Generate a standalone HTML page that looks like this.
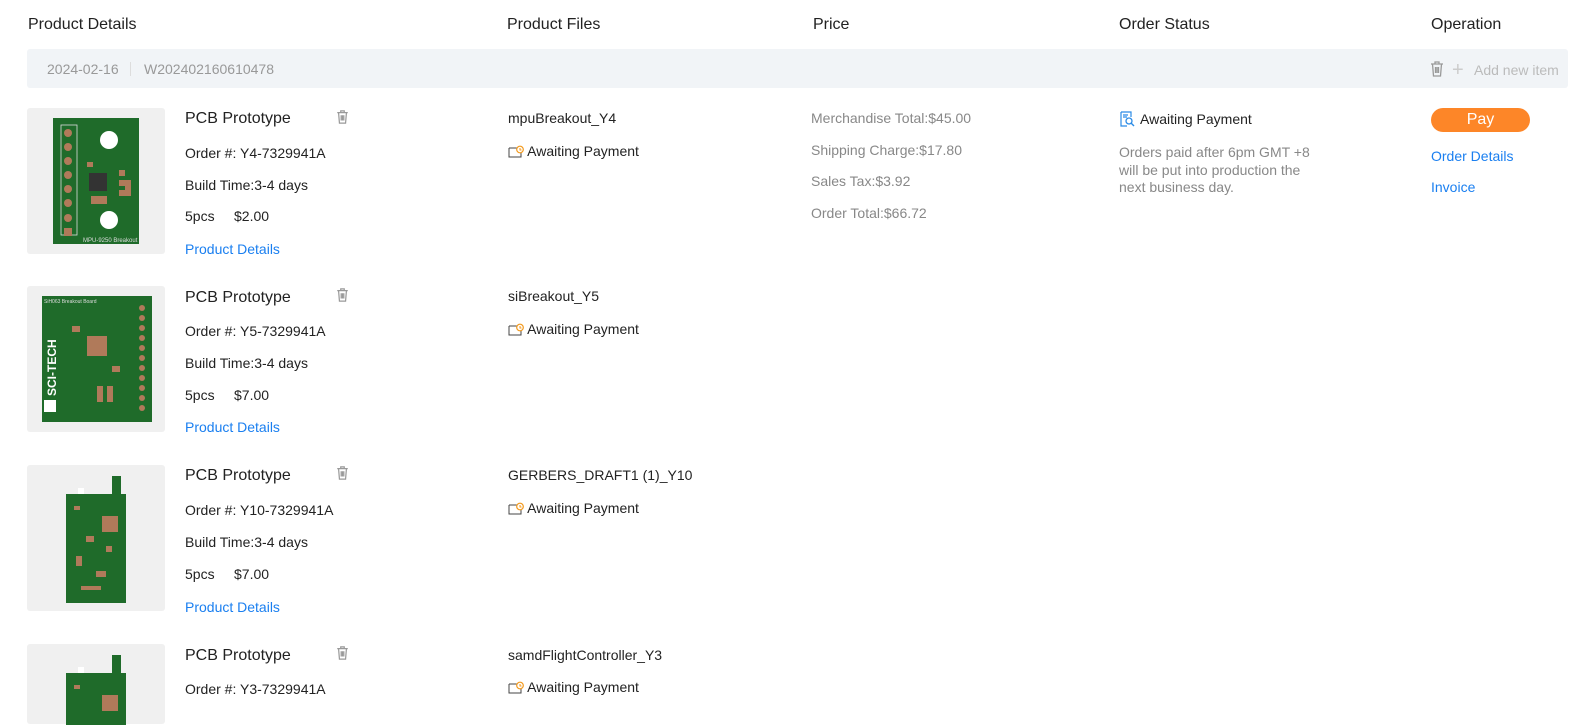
<!DOCTYPE html>
<html><head><meta charset="utf-8"><style>
*{margin:0;padding:0;box-sizing:border-box}
body{width:1591px;height:712px;overflow:hidden;background:#fff;font-family:"Liberation Sans",Arial,sans-serif;color:#222;position:relative}
.a{position:absolute;white-space:nowrap}
.h{font-size:16px;top:16px;color:#222}
.bar{position:absolute;left:27px;top:49px;width:1541px;height:39px;background:#f1f4f7;border-radius:3px}
.g{color:#999;font-size:14px}
.img{position:absolute;left:27px;width:138px;height:146px;background:#f0f0f0;border-radius:3px}
.pcb{position:absolute;background:#1f6b2a;border:1px solid #164f1e}
.t{font-size:14px;color:#222}
.lk{font-size:14px;color:#1a7ff0}
.p{font-size:14px;color:#888}
</style></head><body>
<div class="a h" style="left:28px">Product Details</div>
<div class="a h" style="left:507px">Product Files</div>
<div class="a h" style="left:813px">Price</div>
<div class="a h" style="left:1119px">Order Status</div>
<div class="a h" style="left:1431px">Operation</div>
<div class="bar"></div>
<div class="a g" style="left:47px;top:61px">2024-02-16</div>
<div class="a" style="left:130px;top:62px;width:1px;height:14px;background:#ddd"></div>
<div class="a g" style="left:144px;top:61px">W202402160610478</div>
<svg class="a" style="left:1430px;top:61px" width="14" height="16" viewBox="0 0 14 16"><path d="M1 3h12M5 3V1h4v2M2.5 3l1 12h7l1-12M5.5 6v6M7 6v6M8.5 6v6" fill="none" stroke="#999" stroke-width="1.3"/></svg>
<div class="a g" style="left:1452px;top:59px;font-size:20px;color:#ccc">+</div>
<div class="a g" style="left:1474px;top:62px;color:#bbb">Add new item</div>

<div class="img" style="top:108px"></div>
<svg class="a" style="left:53px;top:118px" width="86" height="126" viewBox="0 0 86 126">
<rect width="86" height="126" fill="#1f6b2a"/>
<rect x="8" y="7" width="16" height="110" fill="none" stroke="#ddd" stroke-width="0.8"/>
<g fill="#b07a5a"><circle cx="15" cy="15" r="4"/><circle cx="15" cy="29" r="4"/><circle cx="15" cy="43" r="4"/><circle cx="15" cy="57" r="4"/><circle cx="15" cy="71" r="4"/><circle cx="15" cy="85" r="4"/><circle cx="15" cy="100" r="4"/><rect x="11" y="110" width="8" height="8"/>
<rect x="66" y="52" width="6" height="6"/><rect x="66" y="62" width="6" height="6"/><rect x="66" y="72" width="6" height="6"/><rect x="72" y="62" width="6" height="16"/>
<rect x="38" y="78" width="16" height="8"/><rect x="34" y="44" width="6" height="5"/></g>
<circle cx="56" cy="22" r="9" fill="#fff"/><circle cx="56" cy="102" r="9" fill="#fff"/>
<rect x="36" y="55" width="18" height="18" fill="#333"/>
<text x="30" y="124" font-size="6" fill="#ddd" font-family="Liberation Sans">MPU-9250 Breakout</text>
</svg>
<div class="img" style="top:286px"></div>
<svg class="a" style="left:42px;top:296px" width="110" height="126" viewBox="0 0 110 126">
<rect width="110" height="126" fill="#1f6b2a"/>
<text x="2" y="7" font-size="5" fill="#ddd" font-family="Liberation Sans">SiH063 Breakout Board</text>
<text x="14" y="100" font-size="12" font-weight="bold" fill="#fff" transform="rotate(-90 14 100)" font-family="Liberation Sans">SCI-TECH</text>
<rect x="2" y="104" width="12" height="12" fill="#fff"/>
<g fill="#b07a5a"><circle cx="100" cy="12" r="3"/><circle cx="100" cy="22" r="3"/><circle cx="100" cy="32" r="3"/><circle cx="100" cy="42" r="3"/><circle cx="100" cy="52" r="3"/><circle cx="100" cy="62" r="3"/><circle cx="100" cy="72" r="3"/><circle cx="100" cy="82" r="3"/><circle cx="100" cy="92" r="3"/><circle cx="100" cy="102" r="3"/><circle cx="100" cy="112" r="3"/>
<rect x="45" y="40" width="20" height="20"/><rect x="30" y="30" width="8" height="6"/><rect x="70" y="70" width="8" height="6"/><rect x="55" y="90" width="6" height="16"/><rect x="65" y="90" width="6" height="16"/></g>
</svg>
<div class="img" style="top:465px"></div>
<svg class="a" style="left:66px;top:476px" width="60" height="127" viewBox="0 0 60 127">
<rect x="0" y="18" width="60" height="109" fill="#1f6b2a"/><rect x="46" y="0" width="9" height="20" fill="#1f6b2a"/>
<rect x="12" y="12" width="6" height="6" fill="#fff"/>
<g fill="#b07a5a"><rect x="36" y="40" width="16" height="16"/><rect x="8" y="30" width="6" height="4"/><rect x="20" y="60" width="8" height="6"/><rect x="10" y="80" width="6" height="10"/><rect x="30" y="95" width="10" height="6"/><rect x="15" y="110" width="20" height="4"/><rect x="40" y="70" width="6" height="6"/></g>
</svg>
<div class="img" style="top:644px;height:80px"></div>
<svg class="a" style="left:66px;top:655px" width="60" height="70" viewBox="0 0 60 70">
<rect x="0" y="18" width="60" height="60" fill="#1f6b2a"/><rect x="46" y="0" width="9" height="20" fill="#1f6b2a"/>
<rect x="12" y="12" width="6" height="6" fill="#fff"/>
<g fill="#b07a5a"><rect x="36" y="40" width="16" height="16"/><rect x="8" y="30" width="6" height="4"/></g>
</svg>

<div class="a" style="left:185px;top:110px;font-size:16px">PCB Prototype</div>
<div class="a t" style="left:185px;top:145px">Order #: Y4-7329941A</div>
<div class="a t" style="left:185px;top:177px">Build Time:3-4 days</div>
<div class="a t" style="left:185px;top:208px">5pcs&nbsp;&nbsp;&nbsp;&nbsp;&nbsp;$2.00</div>
<div class="a lk" style="left:185px;top:241px">Product Details</div>

<div class="a" style="left:185px;top:289px;font-size:16px">PCB Prototype</div>
<div class="a t" style="left:185px;top:323px">Order #: Y5-7329941A</div>
<div class="a t" style="left:185px;top:355px">Build Time:3-4 days</div>
<div class="a t" style="left:185px;top:387px">5pcs&nbsp;&nbsp;&nbsp;&nbsp;&nbsp;$7.00</div>
<div class="a lk" style="left:185px;top:419px">Product Details</div>

<div class="a" style="left:185px;top:467px;font-size:16px">PCB Prototype</div>
<div class="a t" style="left:185px;top:502px">Order #: Y10-7329941A</div>
<div class="a t" style="left:185px;top:534px">Build Time:3-4 days</div>
<div class="a t" style="left:185px;top:566px">5pcs&nbsp;&nbsp;&nbsp;&nbsp;&nbsp;$7.00</div>
<div class="a lk" style="left:185px;top:599px">Product Details</div>

<div class="a" style="left:185px;top:647px;font-size:16px">PCB Prototype</div>
<div class="a t" style="left:185px;top:681px">Order #: Y3-7329941A</div>

<svg class="a" style="left:336px;top:110px" width="13" height="14" viewBox="0 0 14 16"><path d="M1 3h12M5 3V1h4v2M2.5 3l1 12h7l1-12M5.5 6v6M7 6v6M8.5 6v6" fill="none" stroke="#999" stroke-width="1.4"/></svg>
<svg class="a" style="left:336px;top:288px" width="13" height="14" viewBox="0 0 14 16"><path d="M1 3h12M5 3V1h4v2M2.5 3l1 12h7l1-12M5.5 6v6M7 6v6M8.5 6v6" fill="none" stroke="#999" stroke-width="1.4"/></svg>
<svg class="a" style="left:336px;top:466px" width="13" height="14" viewBox="0 0 14 16"><path d="M1 3h12M5 3V1h4v2M2.5 3l1 12h7l1-12M5.5 6v6M7 6v6M8.5 6v6" fill="none" stroke="#999" stroke-width="1.4"/></svg>
<svg class="a" style="left:336px;top:646px" width="13" height="14" viewBox="0 0 14 16"><path d="M1 3h12M5 3V1h4v2M2.5 3l1 12h7l1-12M5.5 6v6M7 6v6M8.5 6v6" fill="none" stroke="#999" stroke-width="1.4"/></svg>

<div class="a t" style="left:508px;top:110px">mpuBreakout_Y4</div>
<div class="a t" style="left:508px;top:288px">siBreakout_Y5</div>
<div class="a t" style="left:508px;top:467px">GERBERS_DRAFT1 (1)_Y10</div>
<div class="a t" style="left:508px;top:647px">samdFlightController_Y3</div>

<div class="a t" style="left:508px;top:143px"><svg width="16" height="13" viewBox="0 0 16 13" style="vertical-align:-2px"><path d="M1 3h8M1 3v9h12V8" fill="none" stroke="#444" stroke-width="1"/><circle cx="12" cy="4.5" r="3.3" fill="none" stroke="#f39a1e" stroke-width="1.2"/><path d="M12 3v2h1.5" stroke="#f39a1e" fill="none"/></svg> Awaiting Payment</div>
<div class="a t" style="left:508px;top:321px"><svg width="16" height="13" viewBox="0 0 16 13" style="vertical-align:-2px"><path d="M1 3h8M1 3v9h12V8" fill="none" stroke="#444" stroke-width="1"/><circle cx="12" cy="4.5" r="3.3" fill="none" stroke="#f39a1e" stroke-width="1.2"/><path d="M12 3v2h1.5" stroke="#f39a1e" fill="none"/></svg> Awaiting Payment</div>
<div class="a t" style="left:508px;top:500px"><svg width="16" height="13" viewBox="0 0 16 13" style="vertical-align:-2px"><path d="M1 3h8M1 3v9h12V8" fill="none" stroke="#444" stroke-width="1"/><circle cx="12" cy="4.5" r="3.3" fill="none" stroke="#f39a1e" stroke-width="1.2"/><path d="M12 3v2h1.5" stroke="#f39a1e" fill="none"/></svg> Awaiting Payment</div>
<div class="a t" style="left:508px;top:679px"><svg width="16" height="13" viewBox="0 0 16 13" style="vertical-align:-2px"><path d="M1 3h8M1 3v9h12V8" fill="none" stroke="#444" stroke-width="1"/><circle cx="12" cy="4.5" r="3.3" fill="none" stroke="#f39a1e" stroke-width="1.2"/><path d="M12 3v2h1.5" stroke="#f39a1e" fill="none"/></svg> Awaiting Payment</div>

<div class="a p" style="left:811px;top:110px">Merchandise Total:$45.00</div>
<div class="a p" style="left:811px;top:142px">Shipping Charge:$17.80</div>
<div class="a p" style="left:811px;top:173px">Sales Tax:$3.92</div>
<div class="a p" style="left:811px;top:205px">Order Total:$66.72</div>

<svg class="a" style="left:1120px;top:111px" width="15" height="16" viewBox="0 0 15 16"><path d="M1 1h10v5M1 1v14h6M3 4h5M3 6h4" fill="none" stroke="#2b8be6" stroke-width="1.2"/><circle cx="9" cy="10" r="3" fill="none" stroke="#2b8be6" stroke-width="1.3"/><path d="M11 12l3 3" stroke="#2b8be6" stroke-width="1.4"/></svg>
<div class="a t" style="left:1140px;top:111px">Awaiting Payment</div>
<div class="a p" style="left:1119px;top:144px;line-height:17.5px;white-space:normal;width:200px">Orders paid after 6pm GMT +8 will be put into production the next business day.</div>

<div class="a" style="left:1431px;top:108px;width:99px;height:24px;border-radius:12px;background:#fd8628;color:#fff;font-size:16px;text-align:center;line-height:24px">Pay</div>
<div class="a lk" style="left:1431px;top:148px">Order Details</div>
<div class="a lk" style="left:1431px;top:179px">Invoice</div>
</body></html>
